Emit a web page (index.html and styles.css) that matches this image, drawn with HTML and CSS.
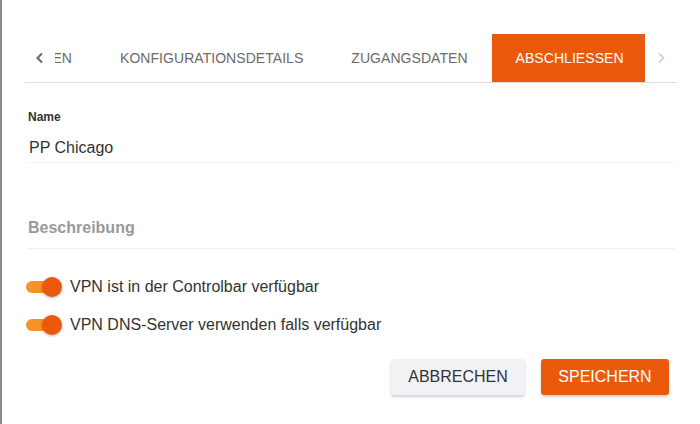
FILE: index.html
```html
<!DOCTYPE html>
<html lang="de">
<head>
<meta charset="utf-8">
<link rel="stylesheet" href="styles.css">
</head>
<body>
<div class="page">
  <div class="backdrop"></div>
  <div class="dialog">
    <div class="tabbar">
      <button class="arrow arrow-left" aria-label="zurück">
        <svg width="10" height="12" viewBox="0 0 10 12"><path d="M7 1.5 L2.5 6 L7 10.5" fill="none" stroke="#666" stroke-width="2"/></svg>
      </button>
      <div class="tabs">
        <div class="tab tab-clipped"><span>EINSTELLUNGEN</span></div>
        <div class="tab">KONFIGURATIONSDETAILS</div>
        <div class="tab">ZUGANGSDATEN</div>
        <div class="tab active">ABSCHLIESSEN</div>
      </div>
      <button class="arrow arrow-right" aria-label="weiter">
        <svg width="10" height="12" viewBox="0 0 10 12"><path d="M3 1.5 L7.5 6 L3 10.5" fill="none" stroke="#d6d6d6" stroke-width="2"/></svg>
      </button>
    </div>

    <div class="field">
      <label class="field-label">Name</label>
      <div class="field-value">PP Chicago</div>
    </div>

    <div class="field field-desc">
      <div class="placeholder">Beschreibung</div>
    </div>

    <div class="switches">
      <div class="switch-row">
        <span class="switch"><span class="track"></span><span class="knob"></span></span>
        <span class="switch-label">VPN ist in der Controlbar verfügbar</span>
      </div>
      <div class="switch-row">
        <span class="switch"><span class="track"></span><span class="knob"></span></span>
        <span class="switch-label">VPN DNS-Server verwenden falls verfügbar</span>
      </div>
    </div>

    <div class="actions">
      <button class="btn btn-secondary">ABBRECHEN</button>
      <button class="btn btn-primary">SPEICHERN</button>
    </div>
  </div>
</div>
</body>
</html>
```
FILE: styles.css
```css
html, body {
  margin: 0;
  padding: 0;
  background: #ffffff;
  font-family: "Liberation Sans", Arial, sans-serif;
  color: #333;
}

.page {
  display: flex;
  width: 700px;
  height: 424px;
  overflow: hidden;
}

.backdrop {
  width: 2px;
  flex: none;
  background: #8a8a8a;
}

.dialog {
  flex: 1;
  background: #fff;
  border-top-left-radius: 3px;
  padding: 34px 0 0 23px;
  box-sizing: border-box;
}

.tabbar {
  display: flex;
  width: 652px;
  height: 48px;
  border-bottom: 1px solid #dedede;
}

.arrow {
  border: 0;
  background: transparent;
  padding: 0;
  display: flex;
  align-items: center;
  justify-content: center;
  flex: none;
}

.arrow-left {
  width: 30px;
}

.arrow-right {
  width: 32px;
}

.tabs {
  display: flex;
  flex: 1;
  overflow: hidden;
}

.tab {
  display: flex;
  align-items: center;
  padding: 0 24px;
  font-size: 14px;
  letter-spacing: 0.05px;
  color: #6b6b6b;
  white-space: nowrap;
  flex: none;
}

.tab-clipped {
  width: 17px;
  padding: 0 24px 0 0;
  justify-content: flex-end;
  overflow: hidden;
}

.tab.active {
  background: #eb5a0c;
  color: #fff;
}

.field {
  width: 647px;
  border-bottom: 1px solid #f1f1f1;
  margin-left: 3px;
}

.field-label {
  display: block;
  padding-top: 27px;
  font-size: 12px;
  font-weight: bold;
  color: #333;
  line-height: 14px;
}

.field-value {
  font-size: 16px;
  line-height: 20px;
  padding: 14px 0 4px 1px;
  color: #333;
}

.field-desc {
  margin-top: 55px;
}

.placeholder {
  font-size: 16px;
  font-weight: bold;
  color: #9a9a9a;
  line-height: 20px;
  padding-bottom: 10px;
}

.switches {
  display: flex;
  flex-direction: column;
  gap: 18px;
  margin-top: 28px;
  margin-left: 1px;
}

.switch-row {
  display: flex;
  align-items: center;
  gap: 8px;
  height: 20px;
}

.switch {
  position: relative;
  width: 36px;
  height: 20px;
  flex: none;
}

.track {
  position: absolute;
  left: 0;
  top: 4px;
  width: 30px;
  height: 12px;
  border-radius: 6px;
  background: #f7922a;
}

.knob {
  position: absolute;
  right: 0;
  top: 0;
  width: 20px;
  height: 20px;
  border-radius: 50%;
  background: #eb5a0c;
  box-shadow: 0 1px 3px rgba(0,0,0,0.3);
}

.switch-label {
  font-size: 16px;
  color: #333;
}

.actions {
  display: flex;
  justify-content: flex-end;
  gap: 16px;
  width: 644px;
  margin-top: 24px;
}

.btn {
  height: 36px;
  border: 0;
  border-radius: 3px;
  font-family: "Liberation Sans", Arial, sans-serif;
  font-size: 16px;
  padding: 0 16px;
  box-shadow: 0 2px 3px rgba(0,0,0,0.18);
}

.btn-secondary {
  width: 134px;
  background: #f1f2f6;
  color: #333;
}

.btn-primary {
  width: 128px;
  background: #eb5a0c;
  color: #fff;
}
```
